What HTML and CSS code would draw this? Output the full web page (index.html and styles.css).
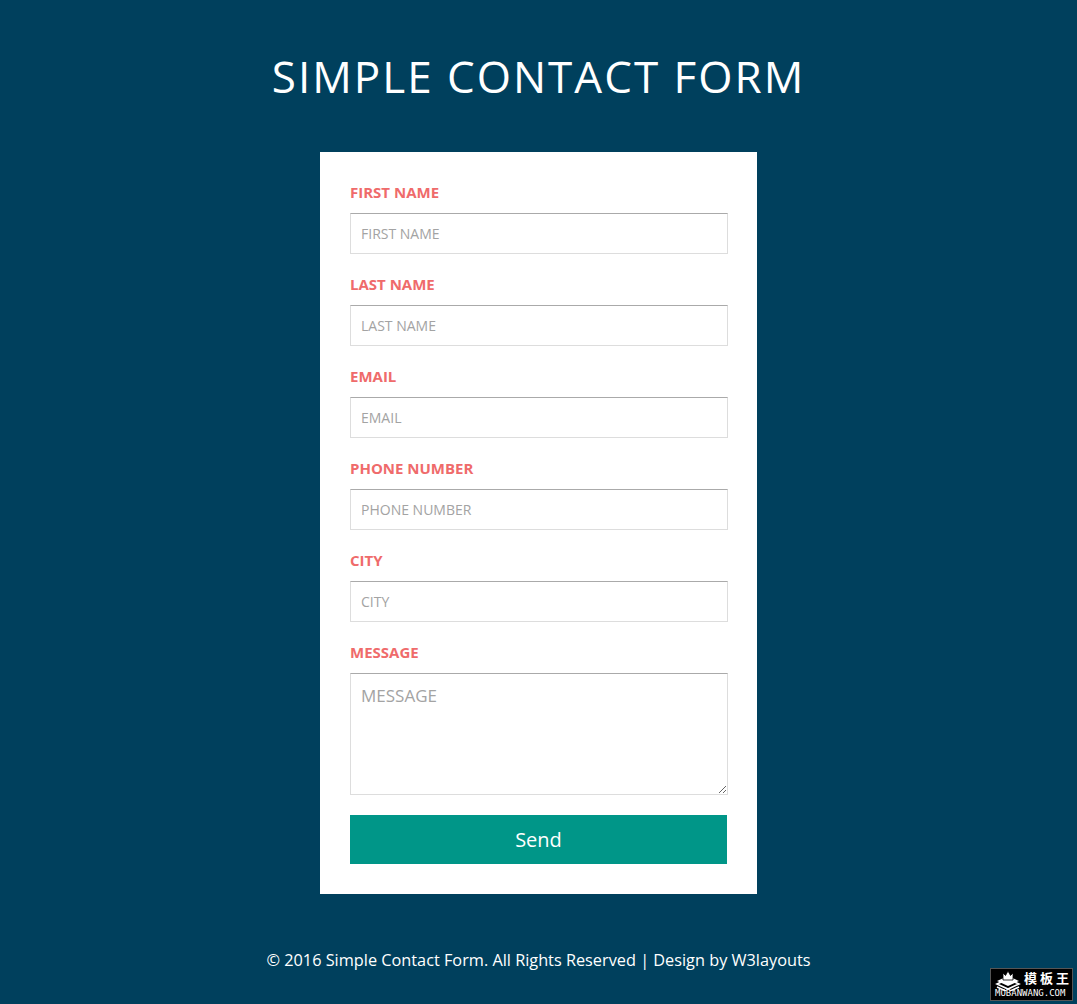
FILE: index.html
```html
<!DOCTYPE html>
<html lang="en">
<head>
    <meta charset="UTF-8">
    <link rel="stylesheet" href="styles.css">
    <title>Simple Contact Form</title>
</head>
<body>
<h1 id="h">SIMPLE CONTACT FORM</h1>

<div id="page">
    <form class="contact" onsubmit="return false">
        <label class="lbl">FIRST NAME</label>
        <input type="text" class="field" placeholder="FIRST NAME">

        <label class="lbl">LAST NAME</label>
        <input type="text" class="field" placeholder="LAST NAME">

        <label class="lbl">EMAIL</label>
        <input type="text" class="field" placeholder="EMAIL">

        <label class="lbl">PHONE NUMBER</label>
        <input type="text" class="field" placeholder="PHONE NUMBER">

        <label class="lbl">CITY</label>
        <input type="text" class="field" placeholder="CITY">

        <label class="lbl">MESSAGE</label>
        <textarea class="field msg" placeholder="MESSAGE"></textarea>

        <input type="submit" class="button" value="Send">
    </form>
</div>

<p class="copy">&copy; 2016 Simple Contact Form. All Rights Reserved | Design by W3layouts</p>

<div class="mark">
    <svg width="26" height="22" viewBox="0 0 26 22">
        <path d="M2 15 L13 10 L24 15 L13 20 Z" fill="none" stroke="#fff" stroke-width="1.6"/>
        <path d="M2 18 L13 23 L24 18" fill="none" stroke="#fff" stroke-width="1.6"/>
        <path d="M2 12 L13 7 L24 12 L13 17 Z" fill="#fff"/>
        <path d="M8 11 L8 4 L10.5 6.5 L13 2 L15.5 6.5 L18 4 L18 11 Z" fill="#fff" stroke="#000" stroke-width="0.8"/>
    </svg>
    <span class="mark-cn">模板王</span>
    <span class="mark-en">MOBANWANG.COM</span>
</div>
</body>
</html>
```

FILE: styles.css
```css
body {
    margin: 0;
    padding: 0;
    background: #00405d;
    font-family: "Open Sans", "Noto Sans", sans-serif;
    min-height: 1004px;
    position: relative;
}

#h {
    color: #fff;
    font-size: 44px;
    font-weight: 400;
    letter-spacing: 2px;
    line-height: 54px;
    text-align: center;
    margin: 0;
    padding: 49px 0 49px;
}

#page {
    width: 378px;
    margin: 0 auto;
    background: #fff;
    padding: 30px 29px 30px 30px;
}

.contact {
    display: flex;
    flex-direction: column;
}

.lbl {
    color: #ef6b6b;
    font-size: 15px;
    font-weight: 700;
    line-height: 20px;
    margin-bottom: 11px;
}

.field {
    box-sizing: border-box;
    width: 100%;
    height: 41px;
    border: 1px solid #ddd;
    border-top-color: #aaa;
    padding: 0 10px;
    margin: 0 0 20px;
    font-family: inherit;
    font-size: 14px;
    color: #555;
    outline: none;
}

.field::placeholder {
    color: #a3a3a3;
}

.msg {
    height: 122px;
    padding: 10px;
    font-size: 17px;
    resize: vertical;
}

.button {
    border: 0;
    width: 377px;
    height: 49px;
    color: #fff;
    background: #009688;
    font-family: inherit;
    font-size: 20px;
    text-align: center;
    cursor: pointer;
}

.button:hover {
    background: #00877a;
}

.copy {
    color: #fff;
    font-size: 16.3px;
    text-align: center;
    margin: 55px 0 0;
}

/* site badge, bottom right corner */
.mark {
    position: absolute;
    right: 5px;
    bottom: 4px;
    width: 81px;
    height: 31px;
    background: #000;
    box-shadow: 0 0 0 1px #555;
    color: #fff;
}

.mark svg {
    position: absolute;
    left: 4px;
    top: 0;
}

.mark-cn {
    position: absolute;
    left: 33px;
    top: 1px;
    font-family: "Noto Sans CJK SC", sans-serif;
    font-weight: 700;
    font-size: 13px;
    line-height: 16px;
    letter-spacing: 3px;
}

.mark-en {
    position: absolute;
    left: 4px;
    bottom: 2px;
    font-family: "DejaVu Sans Mono", monospace;
    font-size: 9px;
    line-height: 10px;
    letter-spacing: 0;
}
```
